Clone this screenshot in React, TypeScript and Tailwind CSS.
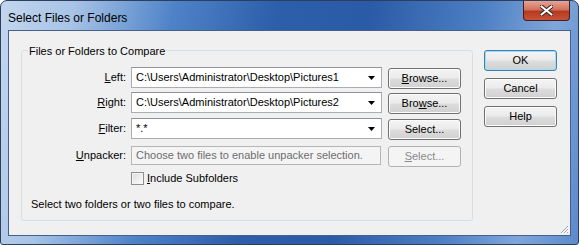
import React from "react";

// Win7 classic push button
function Btn({ children, primary, disabled }: { children: React.ReactNode; primary?: boolean; disabled?: boolean }) {
  if (disabled) {
    return (
      <div className="w-[73px] h-[21px] flex items-center justify-center rounded-[3px] border border-[#adb2b5] bg-[#f4f4f4] text-[#8a8a8a]">
        {children}
      </div>
    );
  }
  return (
    <div
      className={
        "w-[73px] h-[21px] flex items-center justify-center rounded-[3px] border text-black bg-[linear-gradient(#f4f4f4_0%,#ebebeb_48%,#dddddd_52%,#d0d0d0_100%)] " +
        (primary ? "border-[#3c7fb1] shadow-[inset_0_0_0_1px_#9fdcf8]" : "border-[#707070] shadow-[inset_0_0_0_1px_#fcfcfc]")
      }
    >
      {children}
    </div>
  );
}

// combo box with dropdown arrow
function Combo({ value }: { value: string }) {
  return (
    <div className="w-[251px] h-[21px] flex items-center border border-[#abadb3] border-t-[#8f939b] bg-white pl-[4px] pr-[6px]">
      <span className="flex-1 text-black whitespace-nowrap">{value}</span>
      <svg width="7" height="4" viewBox="0 0 7 4">
        <path d="M0 0h7L3.5 4z" fill="#000" />
      </svg>
    </div>
  );
}

export default function App() {
  return (
    <div
      className="w-[579px] h-[245px] flex flex-col rounded-t-[7px] rounded-b-[3px] border border-[#2d3f5c] bg-[linear-gradient(100deg,#c3d6ee_0%,#a7c3e6_12%,#4f83c8_28%,#2c5ea9_45%,#2b5ba6_60%,#4d7fc3_78%,#7fa6db_90%,#5d8acb_100%)] text-[11px] overflow-hidden"
      style={{ fontFamily: '"Liberation Sans", Arial, sans-serif' }}
    >
      {/* title bar */}
      <div className="h-[29px] flex items-start relative">
        <span className="ml-[7px] mt-[8px] text-[12px] text-black">Select Files or Folders</span>
        <div className="ml-auto mr-[8px] w-[47px] h-[20px] rounded-b-[4px] border border-[#4a1c1c] border-t-0 bg-[linear-gradient(#e8a493_0%,#d0735e_45%,#b8391f_55%,#c6533a_100%)] flex items-center justify-center">
          <svg width="13" height="11" viewBox="0 0 13 11">
            <path d="M1.5 1.5l10 8M11.5 1.5l-10 8" stroke="#3a2020" strokeWidth="4" strokeLinecap="round" />
            <path d="M1.5 1.5l10 8M11.5 1.5l-10 8" stroke="#fff" strokeWidth="2.2" strokeLinecap="round" />
          </svg>
        </div>
      </div>

      {/* client area */}
      <div className="flex-1 mx-[7px] mb-[8px] border border-[#44618c] bg-[#f0f0f0] relative flex">
        {/* group box */}
        <div className="ml-[12px] mt-[19px] w-[452px] h-[171px] border border-[#d5dfe5] rounded-[3px] relative shrink-0">
          <span className="absolute left-[6px] -top-[8px] px-[1px] bg-[#f0f0f0] text-black">Files or Folders to Compare</span>

          <div className="mt-[16px] flex flex-col">
            <div className="flex items-center h-[21px]">
              <span className="w-[104px] text-right text-black"><u>L</u>eft:</span>
              <div className="ml-[5px]"><Combo value="C:\Users\Administrator\Desktop\Pictures1" /></div>
              <div className="ml-[6px] mt-[2px]"><Btn><span><u>B</u>rowse...</span></Btn></div>
            </div>
            <div className="flex items-center h-[21px] mt-[4px]">
              <span className="w-[104px] text-right text-black"><u>R</u>ight:</span>
              <div className="ml-[5px]"><Combo value="C:\Users\Administrator\Desktop\Pictures2" /></div>
              <div className="ml-[6px] mt-[2px]"><Btn><span>Bro<u>w</u>se...</span></Btn></div>
            </div>
            <div className="flex items-center h-[21px] mt-[5px]">
              <span className="w-[104px] text-right text-black"><u>F</u>ilter:</span>
              <div className="ml-[5px]"><Combo value="*.*" /></div>
              <div className="ml-[6px] mt-[2px]"><Btn>Select...</Btn></div>
            </div>
            <div className="flex items-center h-[21px] mt-[6px]">
              <span className="w-[104px] text-right text-black"><u>U</u>npacker:</span>
              <div className="ml-[5px] w-[250px] h-[19px] flex items-center border border-[#b5b5b5] bg-[#f4f4f4] pl-[4px] text-[#6d6d6d] whitespace-nowrap">
                Choose two files to enable unpacker selection.
              </div>
              <div className="ml-[7px] mt-[1px]"><Btn disabled><span><u>S</u>elect...</span></Btn></div>
            </div>
            <div className="flex items-center h-[14px] mt-[5px] ml-[109px]">
              <div className="w-[13px] h-[13px] border border-[#8e8f8f] bg-[linear-gradient(135deg,#dcdcdc,#fdfdfd)] shadow-[inset_0_0_0_1px_#f4f4f4]" />
              <span className="ml-[3px] text-black"><u>I</u>nclude Subfolders</span>
            </div>
            <div className="mt-[11px] ml-[9px] text-black">Select two folders or two files to compare.</div>
          </div>
        </div>

        {/* right buttons */}
        <div className="ml-[11px] mt-[19px] flex flex-col gap-[7px]">
          <Btn primary>OK</Btn>
          <Btn>Cancel</Btn>
          <Btn>Help</Btn>
        </div>

        {/* size grip */}
        <svg className="absolute right-[1px] bottom-[1px]" width="10" height="10" viewBox="0 0 10 10">
          <path d="M9 2L2 9M9 5L5 9M9 8L8 9" stroke="#9aa3ad" strokeWidth="1" />
          <path d="M10 3L3 10M10 6L6 10" stroke="#ffffff" strokeWidth="1" />
        </svg>
      </div>
    </div>
  );
}
